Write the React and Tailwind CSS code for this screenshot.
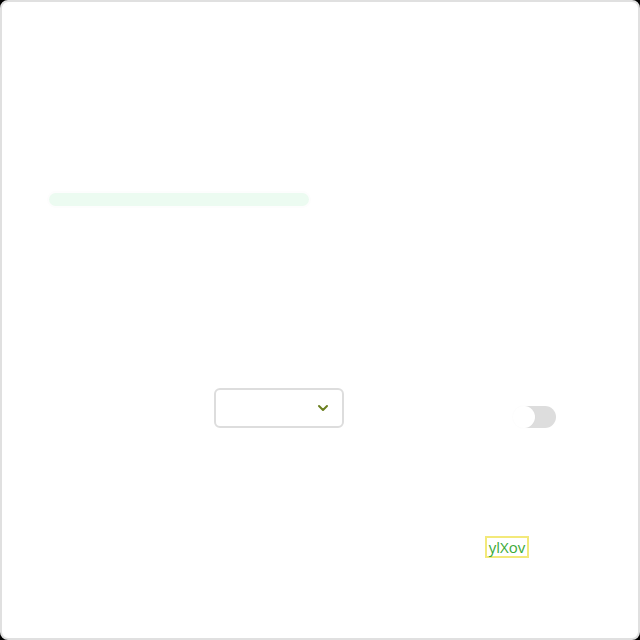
import React, { useState } from 'react';
import { ChevronDown } from 'lucide-react';

const App = () => {
  const [on, setOn] = useState(false);

  return (
    <div className="w-[640px] h-[640px] bg-black">
      <div
        className="w-[640px] h-[640px] bg-white border-2 border-[#e0e0e0] rounded-lg flex flex-col"
        style={{ fontFamily: '"Open Sans", "Liberation Sans", sans-serif' }}
      >
        <div className="mt-[191px] ml-[47px] w-[260px] h-[13px] rounded-full bg-[#ecfbf1] ring-2 ring-[#fdfdfd]"></div>

        <div className="mt-[182px] flex items-end">
          <div className="ml-[212px] w-[130px] h-[40px] border-2 border-[#dddddd] rounded-md bg-white flex items-center justify-end pr-[11px]">
            <ChevronDown size={16} strokeWidth={3} color="#6b7f1f" />
          </div>
          <button
            type="button"
            onClick={() => setOn(!on)}
            className="ml-[174px] relative w-[38px] h-[22px] rounded-full bg-[#dddddd]"
          >
            <span className="absolute left-[-5px] top-0 w-[22px] h-[22px] rounded-full bg-white shadow-[0_0_2px_rgba(0,0,0,0.03)]"></span>
          </button>
        </div>

        <div className="mt-[108px] ml-[483px] self-start border-2 border-[#f3e97a] w-[44px] h-[22px] flex items-center justify-center">
          <span className="text-[15px] leading-none text-[#3aa935]">ylXov</span>
        </div>
      </div>
    </div>
  );
};

export default App;
